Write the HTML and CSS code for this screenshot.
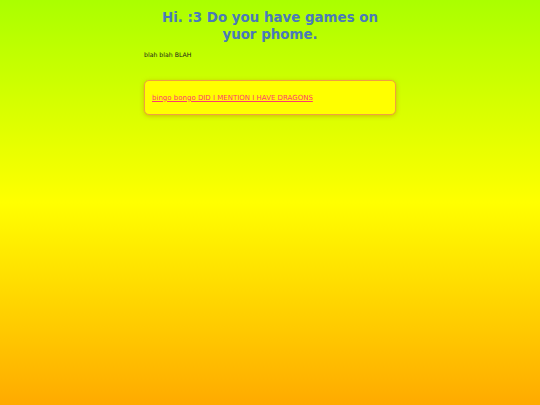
FILE: index.html
```html
<!DOCTYPE html>
<html>
<head>
<meta charset="utf-8">
<link rel="stylesheet" href="styles.css">
</head>
<body>
<div class="page">
  <h1 class="title">Hi. :3 Do you have games on yuor phome.</h1>
  <p class="intro">blah blah BLAH</p>
  <div class="card">
    <a class="card-link" href="#">bingo bongo DID I MENTION I HAVE DRAGONS</a>
  </div>
</div>
</body>
</html>
```
FILE: styles.css
```css
html, body {
  margin: 0;
  padding: 0;
}
body {
  background: linear-gradient(to bottom, #aaff00 0%, #ffff00 50%, #ffaa00 100%);
  min-height: 405px;
  font-family: "DejaVu Sans", Verdana, sans-serif;
}
.page {
  width: 252px;
  margin: 0 auto;
  padding-top: 9px;
}
.title {
  margin: 0;
  font-size: 13.4px;
  line-height: 17px;
  font-weight: bold;
  text-align: center;
  color: #4a7ab8;
}
.intro {
  margin: 7px 0 0;
  font-size: 6.2px;
  line-height: 9px;
  color: #1a1a1a;
}
.card {
  box-sizing: border-box;
  margin-top: 21px;
  height: 35px;
  padding: 0 7px;
  display: flex;
  align-items: center;
  background: #ffff00;
  border: 1px solid #f0a040;
  border-radius: 5px;
  box-shadow: 0 1px 4px rgba(200, 120, 0, 0.5);
}
.card-link {
  font-size: 7px;
  color: #ff3a70;
  text-decoration: underline;
}
```
